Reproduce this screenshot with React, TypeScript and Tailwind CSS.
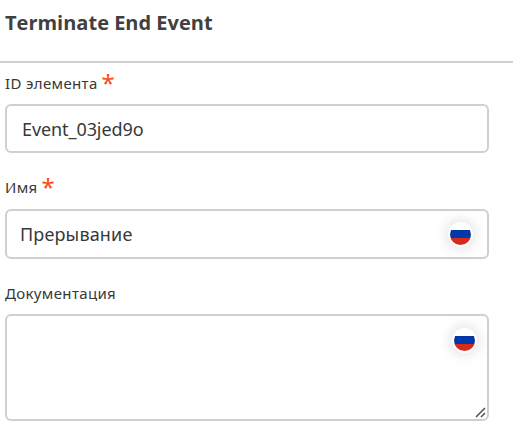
import React from "react";

function Label({ text, required = false }: { text: string; required?: boolean }) {
  return (
    <div className="flex h-5 items-center gap-[4px] whitespace-nowrap text-[15px] leading-5 text-[#383838]">
      <span className="tracking-[0.35px]">{text}</span>
      {required && (
        <span className="h-5 text-[24px] leading-5 text-[#ff4a1a]">*</span>
      )}
    </div>
  );
}

function Flag() {
  return (
    <span className="flex size-[25px] shrink-0 rounded-full bg-white p-[2px] shadow-[0_0_12px_3px_rgba(0,0,0,0.1)]">
      <span className="flex size-[21px] flex-col overflow-hidden rounded-full">
        <span className="h-[6px] bg-white" />
        <span className="h-2 bg-[#0039a6]" />
        <span className="h-[7px] bg-[#d52b1e]" />
      </span>
    </span>
  );
}

export default function App() {
  return (
    <main className="h-[435px] w-[513px] overflow-hidden bg-white font-['Noto_Sans','Open_Sans',sans-serif] text-[#383838]">
      <header className="h-[63px] border-b-2 border-[#cfcfcf] pl-[5px] pt-[9px]">
        <h1 className="font-['Open_Sans','Noto_Sans',sans-serif] text-[20px] font-bold leading-7 text-[#404040]">Terminate End Event</h1>
      </header>
      <div className="w-[489px] pl-[5px] pt-[10px]">
        <Label text="ID элемента" required />
        <div className="mt-[11px] flex h-[49px] items-center rounded-md border-2 border-[#cfcfcf] pl-[15px] pt-px text-[18px] tracking-[-0.08px]">
          Event_03jed9o
        </div>
        <div className="mt-[24px]">
          <Label text="Имя" required />
        </div>
        <div className="mt-[12px] flex h-[50px] items-center justify-between rounded-md border-2 border-[#cfcfcf] pl-[13px] pr-[14px] text-[18px] tracking-[0.15px]">
          <span>Прерывание</span>
          <Flag />
        </div>
        <div className="mt-[24px]">
          <Label text="Документация" />
        </div>
        <div className="mt-[11px] flex h-[107px] flex-col items-end justify-between rounded-md border-2 border-[#cfcfcf] pr-[10px] pt-[12px]">
          <Flag />
          <svg className="-mr-[9px] mb-px size-[11px]" viewBox="0 0 11 11" fill="none" stroke="#555" strokeWidth="1.6">
            <path d="M1 10L10 1M6 10L10 6" />
          </svg>
        </div>
      </div>
    </main>
  );
}
